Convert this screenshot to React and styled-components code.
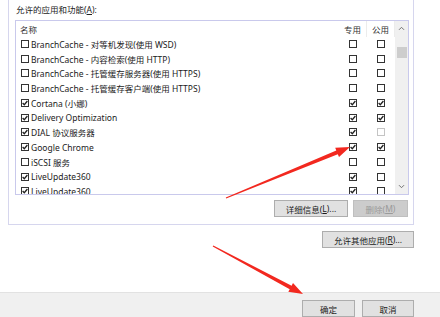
import React from "react";
import styled, { createGlobalStyle } from "styled-components";

const Global = createGlobalStyle`
  html, body { margin: 0; padding: 0; background: #fff; }
  body { font-family: "Noto Sans", "Noto Sans CJK SC", sans-serif; }
`;

const FONT = `"Noto Sans", "Noto Sans CJK SC", sans-serif`;

const Page = styled.div`
  position: relative;
  width: 440px;
  height: 317px;
  overflow: hidden;
  background: #fff;
  display: flex;
  flex-direction: column;
  font-family: ${FONT};
  font-size: 8.5px;
  color: #1b1b1b;
`;

const Main = styled.div`
  flex: 1;
  padding-left: 8px;
  display: flex;
  flex-direction: column;
  width: 406px;
`;

const Panel = styled.div`
  border: 1px solid #d6d6ee;
  border-top: none;
  padding: 0 4px 7px 6px;
  display: flex;
  flex-direction: column;
`;

const Label = styled.div`
  height: 20px;
  line-height: 20px;
  padding-left: 1px;
  color: #222;
`;

const ListBox = styled.div`
  height: 173px;
  border: 1px solid #c9c9ec;
  display: flex;
  overflow: hidden;
`;

const ListBody = styled.div`
  flex: 1;
  display: flex;
  flex-direction: column;
  overflow: hidden;
`;

const Row = styled.div`
  display: grid;
  grid-template-columns: 1fr 28px 28px;
  height: ${(p) => (p.$header ? "15.6px" : "14.75px")};
  flex-shrink: 0;
  align-items: center;
`;

const HeadCell = styled.div`
  height: 100%;
  display: flex;
  align-items: center;
  justify-content: ${(p) => (p.$center ? "center" : "flex-start")};
  padding-left: ${(p) => (p.$center ? "0" : "4px")};
  border-right: ${(p) => (p.$sep ? "1px solid #ececec" : "none")};
  box-sizing: border-box;
  color: #333;
`;

const NameCell = styled.div`
  display: flex;
  align-items: center;
  padding-left: 5px;
  gap: 2px;
  white-space: nowrap;
`;

const CheckCell = styled.div`
  display: flex;
  justify-content: center;
  align-items: center;
`;

const Box = styled.span`
  width: 8px;
  height: 8px;
  box-sizing: border-box;
  border: 1px solid ${(p) => (p.$disabled ? "#c4c4c4" : "#333")};
  background: #fff;
  display: inline-flex;
  align-items: center;
  justify-content: center;
  flex-shrink: 0;
`;

const ScrollBar = styled.div`
  width: 13px;
  background: #f0f0f0;
  display: flex;
  flex-direction: column;
  align-items: center;
`;

const ScrollBtn = styled.div`
  height: 15px;
  width: 100%;
  display: flex;
  align-items: center;
  justify-content: center;
`;

const Track = styled.div`
  flex: 1;
  width: 100%;
  display: flex;
  justify-content: center;
`;

const Thumb = styled.div`
  margin-top: 11px;
  width: 10px;
  height: 11px;
  background: #cdcdcd;
`;

const ButtonRow = styled.div`
  display: flex;
  justify-content: flex-end;
  gap: 5px;
  margin-top: ${(p) => p.$mt || 0}px;
  padding-right: ${(p) => p.$pr || 0}px;
`;

const Button = styled.div`
  width: ${(p) => p.$w}px;
  height: 17px;
  box-sizing: border-box;
  border: 1px solid ${(p) => (p.$disabled ? "#bfbfbf" : "#adadad")};
  background: ${(p) => (p.$disabled ? "#cccccc" : "#e1e1e1")};
  color: ${(p) => (p.$disabled ? "#9a9a9a" : "#1b1b1b")};
  display: flex;
  align-items: center;
  justify-content: center;
  white-space: nowrap;
  font-size: 8.5px;
`;

const Footer = styled.div`
  height: 25px;
  box-sizing: border-box;
  background: #f0f0f0;
  border-top: 1px solid #e2e2e2;
  padding: 7px 26px 0 0;
  display: flex;
  justify-content: flex-end;
  gap: 7px;
`;

const U = styled.span`
  text-decoration: underline;
`;

const Overlay = styled.svg`
  position: absolute;
  left: 0;
  top: 0;
  pointer-events: none;
`;

const Check = ({ on, disabled }) => (
  <Box $disabled={disabled}>
    {on ? (
      <svg width="6" height="6" viewBox="0 0 6 6">
        <path d="M0.6 3 L2.3 4.7 L5.4 1" fill="none" stroke="#222" strokeWidth="1.3" />
      </svg>
    ) : null}
  </Box>
);

const rows = [
  ["BranchCache - 对等机发现(使用 WSD)", 0, 0, 0],
  ["BranchCache - 内容检索(使用 HTTP)", 0, 0, 0],
  ["BranchCache - 托管缓存服务器(使用 HTTPS)", 0, 0, 0],
  ["BranchCache - 托管缓存客户端(使用 HTTPS)", 0, 0, 0],
  ["Cortana (小娜)", 1, 1, 1],
  ["Delivery Optimization", 1, 1, 1],
  ["DIAL 协议服务器", 1, 1, 0, true],
  ["Google Chrome", 1, 1, 1],
  ["iSCSI 服务", 0, 0, 0],
  ["LiveUpdate360", 1, 1, 0],
  ["LiveUpdate360", 1, 1, 0],
];

const Chevron = ({ down }) => (
  <svg width="7" height="5" viewBox="0 0 7 5">
    <path
      d={down ? "M1 1.2 L3.5 3.7 L6 1.2" : "M1 3.8 L3.5 1.3 L6 3.8"}
      fill="none"
      stroke="#707070"
      strokeWidth="1"
    />
  </svg>
);

export default function App() {
  return (
    <Page>
      <Global />
      <Main>
        <Panel>
          <Label>
            允许的应用和功能(<U>A</U>):
          </Label>
          <ListBox>
            <ListBody>
              <Row $header>
                <HeadCell>名称</HeadCell>
                <HeadCell $center $sep>专用</HeadCell>
                <HeadCell $center $sep>公用</HeadCell>
              </Row>
              {rows.map(([name, a, b, c, dis], i) => (
                <Row key={i}>
                  <NameCell>
                    <Check on={a} />
                    <span>{name}</span>
                  </NameCell>
                  <CheckCell>
                    <Check on={b} />
                  </CheckCell>
                  <CheckCell>
                    <Check on={c} disabled={dis} />
                  </CheckCell>
                </Row>
              ))}
            </ListBody>
            <ScrollBar>
              <ScrollBtn>
                <Chevron />
              </ScrollBtn>
              <Track>
                <Thumb />
              </Track>
              <ScrollBtn>
                <Chevron down />
              </ScrollBtn>
            </ScrollBar>
          </ListBox>
          <ButtonRow $mt={5} $pr={1}>
            <Button $w={74}>
              详细信息(<U>L</U>)...
            </Button>
            <Button $w={55} $disabled>
              删除(<U>M</U>)
            </Button>
          </ButtonRow>
        </Panel>
        <ButtonRow $mt={6}>
          <Button $w={92}>
            允许其他应用(<U>R</U>)...
          </Button>
        </ButtonRow>
      </Main>
      <Footer>
        <Button $w={53}>确定</Button>
        <Button $w={52}>取消</Button>
      </Footer>
      <Overlay width="440" height="317" viewBox="0 0 440 317">
        <polygon
          points="226.2,198.6 337.8,154.2 339,157 350,147 335.2,147.7 336.3,150.5 225.8,197.4"
          fill="#f2281f"
        />
        <polygon
          points="212.7,246.5 289.7,289.2 288.3,291.8 303,294 293,283 291.6,285.7 213.3,245.5"
          fill="#f2281f"
        />
      </Overlay>
    </Page>
  );
}
